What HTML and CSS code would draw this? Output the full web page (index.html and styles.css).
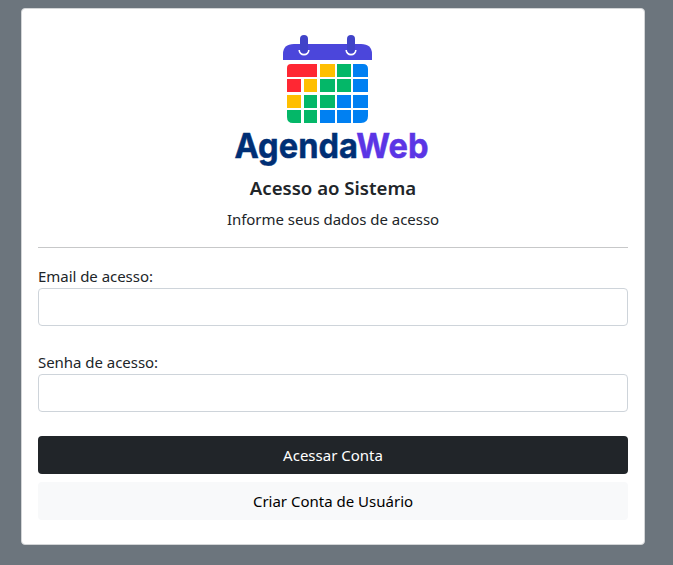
FILE: index.html
```html
<!DOCTYPE html>
<html lang="pt-BR">
<head>
<meta charset="utf-8">
<title>AgendaWeb</title>
<link rel="stylesheet" href="styles.css">
</head>
<body>
<main class="card">
  <header class="header">
    <svg class="logo" width="200" height="144" viewBox="0 0 200 144" role="img" aria-label="AgendaWeb">
      <path fill="#4b46db" d="M50 35v-6q0-10 11-10h67q11 0 11 10v6z"/>
      <g fill="none" stroke="#fff" stroke-width="1.8"><path d="M66.300 25a4.700 4.700 0 0 0 9.400 0M113.300 25a4.700 4.700 0 0 0 9.400 0"/></g>
      <g fill="#4043c8"><rect x="67" y="10" width="8" height="18" rx="4"/><rect x="114" y="10" width="8" height="18" rx="4"/></g>
      <path fill="#ff2733" d="M58 39h26v13H54v-9q0-4 4-4zM54 54h14v13H54z"/>
      <path fill="#ffbf00" d="M87 39h15v13H87zM71 54h13v13H71zM54 70h14v13H54z"/>
      <path fill="#04b768" d="M104 39h14v13h-14zM87 54h15v13H87zM104 54h14v13h-14zM71 70h13v13H71zM87 70h15v13H87zM54 85h14v13h-8q-6 0-6-6zM71 85h13v13H71z"/>
      <path fill="#0080f2" d="M120 39h10q5 0 5 5v8h-15zM120 54h15v13h-15zM104 70h14v13h-14zM120 70h15v13h-15zM87 85h15v13H87zM104 85h14v13h-14zM120 85h15v6q0 7-7 7h-8z"/>
      <text class="wordmark" x="1.500" y="133" textLength="194" lengthAdjust="spacingAndGlyphs"><tspan class="brand-agenda">Agenda</tspan><tspan class="brand-web">Web</tspan></text>
    </svg>
    <h1 class="title">Acesso ao Sistema</h1>
    <p class="subtitle">Informe seus dados de acesso</p>
  </header>
  <hr class="divider">
  <form class="form">
    <div class="field">
      <label for="email">Email de acesso:</label>
      <input id="email" type="email">
    </div>
    <div class="field">
      <label for="senha">Senha de acesso:</label>
      <input id="senha" type="password">
    </div>
    <div class="actions">
      <button class="button dark" type="button">Acessar Conta</button>
      <button class="button light" type="button">Criar Conta de Usuário</button>
    </div>
  </form>
</main>
</body>
</html>
```
FILE: styles.css
```css
* { box-sizing: border-box; }
body {
  margin: 0;
  padding: 8px 28px 0 21px;
  background: #6c757d;
  color: #212529;
  font: 400 15px/24px "Noto Sans", "Open Sans", sans-serif;
}
.card {
  height: 537px;
  padding: 16px;
  background: #fff;
  border: 1px solid #d3d5d7;
  border-radius: 4px;
}
.header { text-align: center; }
.logo { display: block; margin: 0 auto; overflow: visible; }
.wordmark { font: 700 34.5px "Inter", sans-serif; stroke-width: 0.5px; }
.brand-agenda { fill: #002f75; stroke: #002f75; }
.brand-web { fill: #5b35e5; stroke: #5b35e5; }
.title {
  margin: 7px 0;
  font-size: 18.6px;
  font-weight: 600;
  line-height: 24px;
}
.subtitle { margin: 0; letter-spacing: -0.04px; }
.divider { margin: 16px 0; border: 0; border-top: 1px solid #c7c8c9; }
.field { margin-bottom: 24px; }
label { display: block; letter-spacing: -0.04px; }
input {
  display: block;
  width: 100%;
  height: 38px;
  padding: 6px 12px;
  border: 1px solid #ced4da;
  border-radius: 4px;
  background: #fff;
  font: inherit;
}
.actions { display: grid; gap: 8px; }
.button {
  height: 38px;
  padding: 0;
  border: 0;
  border-radius: 4px;
  font: inherit;
}
.dark { background: #212529; color: #fff; }
.light { background: #f8f9fa; color: #000; }
```
